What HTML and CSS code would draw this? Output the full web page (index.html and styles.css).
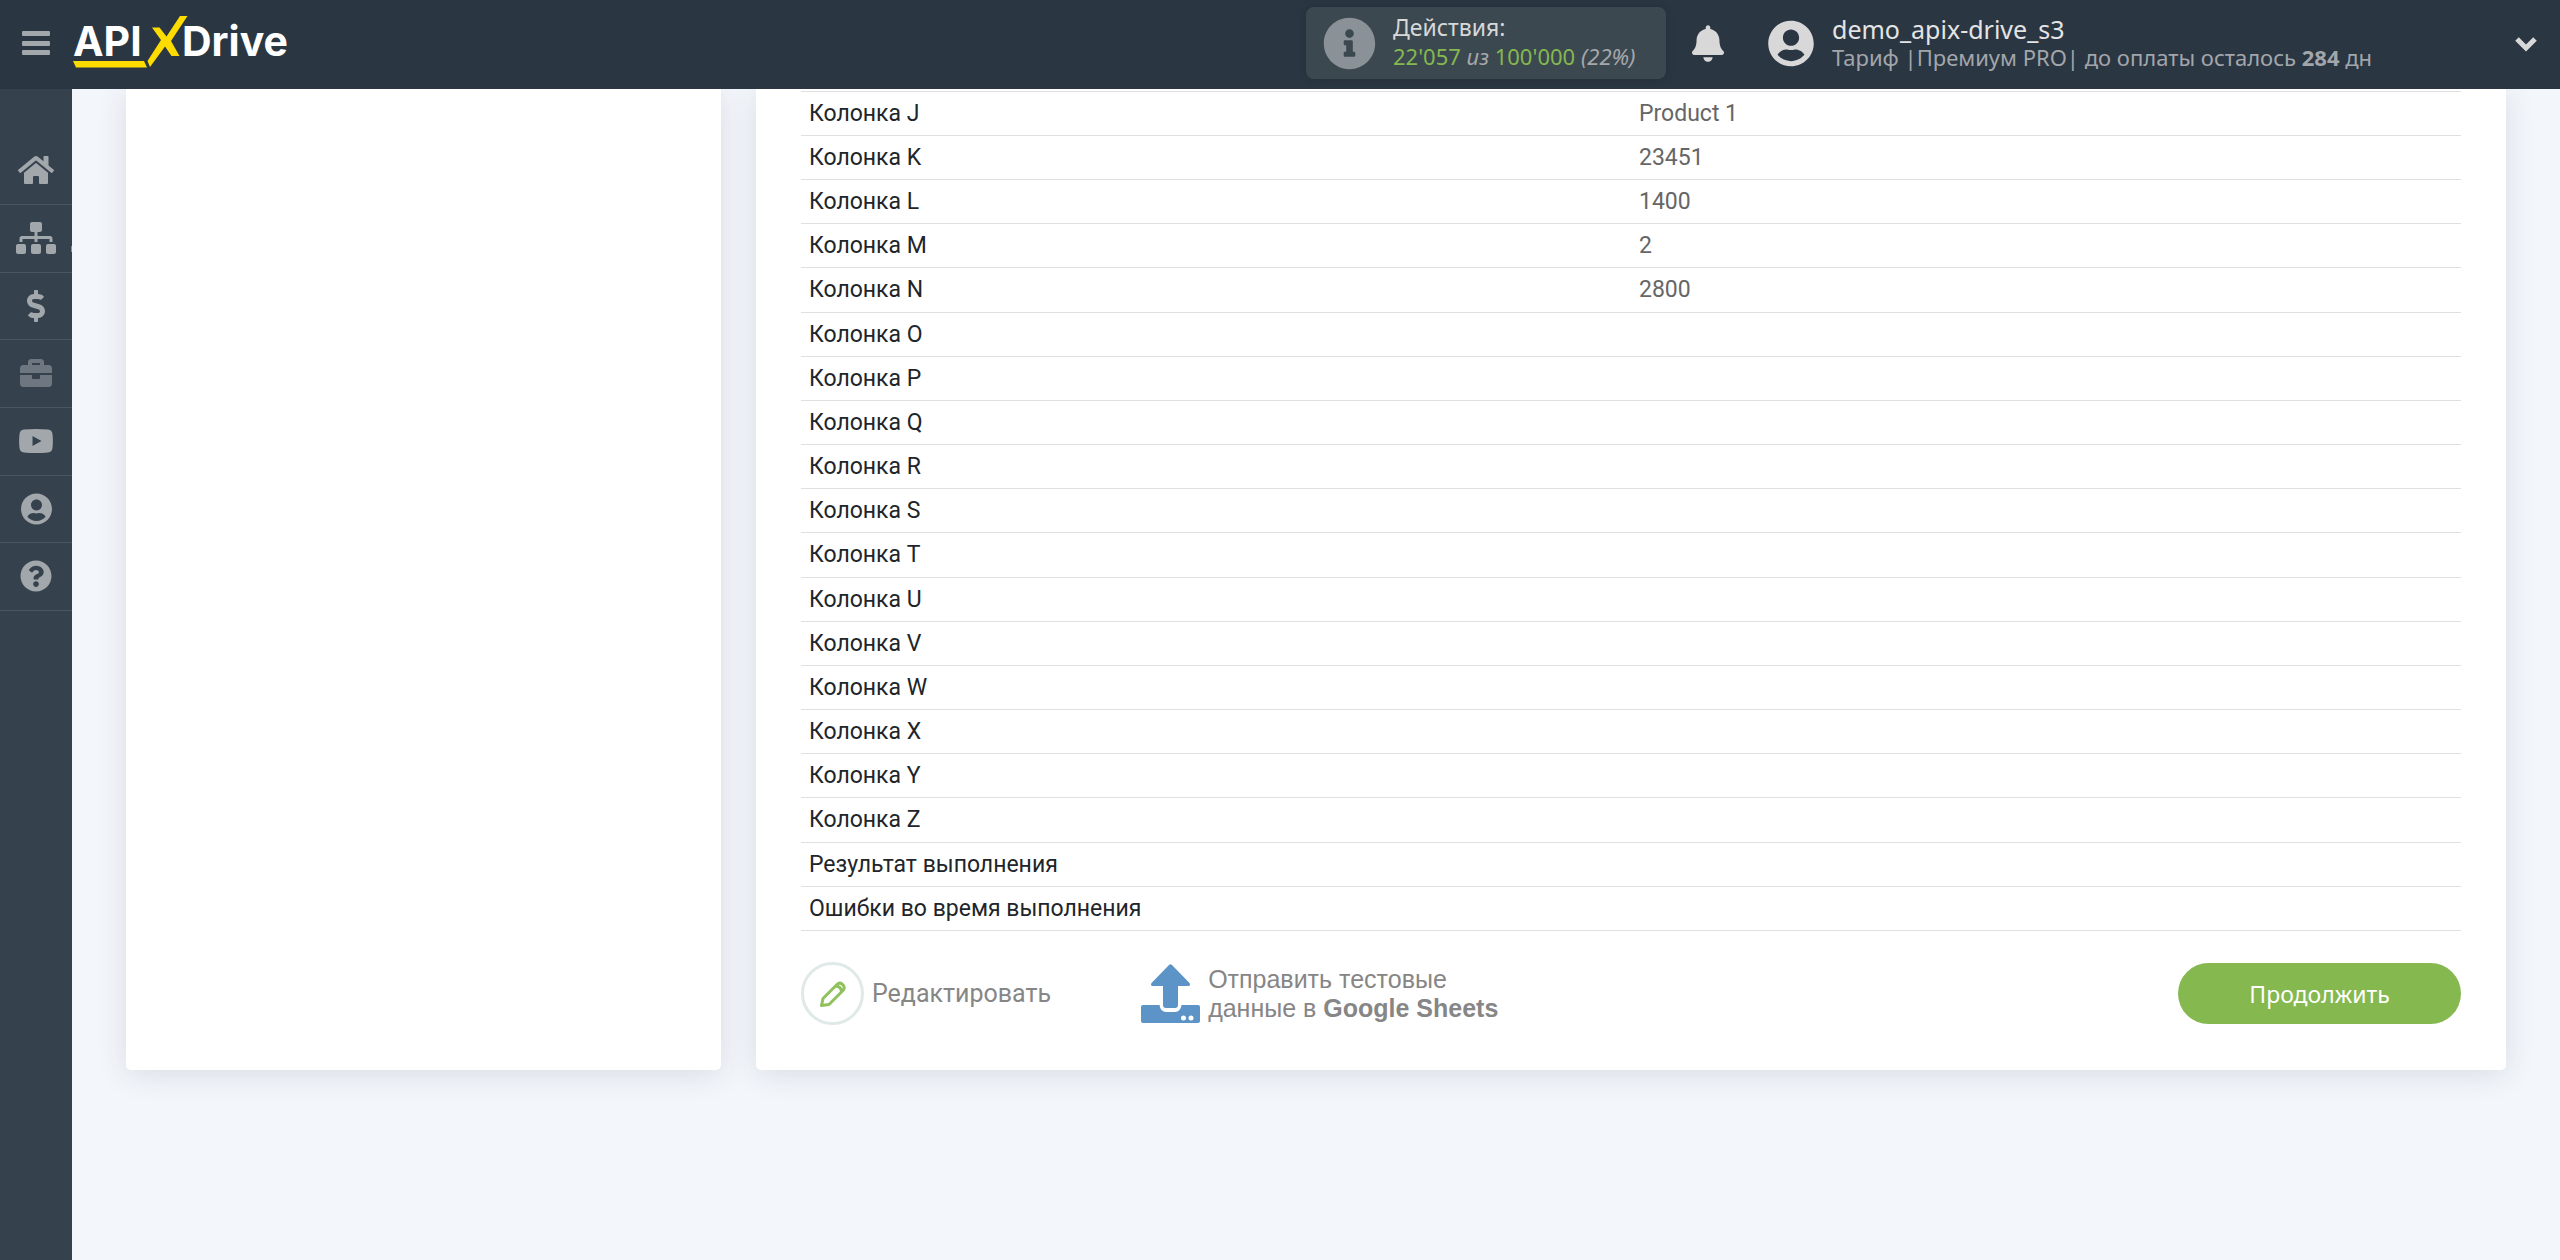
FILE: index.html
```html
<!DOCTYPE html>
<html lang="ru">
<head>
<meta charset="utf-8">
<title>ApiX-Drive</title>
<link rel="stylesheet" href="styles.css">
</head>
<body>
<header class="topbar">
  <button class="icon-btn menu-btn" type="button" aria-label="Меню">
    <svg width="28" height="24" viewBox="0 0 28 24"><rect width="28" height="5" rx="1"/><rect y="10" width="28" height="5" rx="1"/><rect y="19" width="28" height="5" rx="1"/></svg>
  </button>
  <a class="logo" href="#" aria-label="ApiX-Drive">
    <svg width="222" height="56" viewBox="0 1 222 56">
      <text class="logo-text" x="0" y="42">API</text>
      <text class="logo-text" x="109" y="42">Drive</text>
      <path class="logo-mark" d="M0 47H71L74 53.500H3z"/>
      <path class="logo-mark" d="M79 13.500H86.500L93.500 22.500L107 2H114.500L98 27L106.500 42H98.500L92 32.500L77 53L74.500 47L88 26z"/>
    </svg>
  </a>
  <div class="usage">
    <svg class="usage-icon" width="53" height="53" viewBox="0 0 512 512"><path d="M256 8C119.043 8 8 119.083 8 256c0 136.997 111.043 248 248 248s248-111.003 248-248C504 119.083 392.957 8 256 8zm0 110c23.196 0 42 18.804 42 42s-18.804 42-42 42-42-18.804-42-42 18.804-42 42-42zm56 254c0 6.627-5.373 12-12 12h-88c-6.627 0-12-5.373-12-12v-24c0-6.627 5.373-12 12-12h12v-64h-12c-6.627 0-12-5.373-12-12v-24c0-6.627 5.373-12 12-12h64c6.627 0 12 5.373 12 12v100h12c6.627 0 12 5.373 12 12v24z"/></svg>
    <div class="usage-text">
      <div class="usage-title">Действия:</div>
      <div class="usage-value"><span class="num">22'057</span> <i>из</i> <span class="num">100'000</span> <i>(22%)</i></div>
    </div>
  </div>
  <button class="icon-btn bell" type="button" aria-label="Уведомления">
    <svg width="32" height="37" viewBox="0 0 448 512"><path d="M224 512c35.320 0 63.970-28.650 63.970-64H160.030c0 35.350 28.650 64 63.970 64zm215.390-149.710c-19.320-20.760-55.470-51.990-55.470-154.290 0-77.700-54.480-139.900-127.940-155.160V32c0-17.670-14.320-32-31.980-32s-31.980 14.330-31.980 32v20.840C118.560 68.100 64.080 130.300 64.080 208c0 102.300-36.150 133.530-55.470 154.290-6 6.450-8.660 14.160-8.610 21.710.11 16.400 12.980 32 32.100 32h383.800c19.120 0 32-15.600 32.100-32 .05-7.550-2.610-15.270-8.610-21.710z"/></svg>
  </button>
  <div class="user">
    <svg class="user-icon" width="46" height="47" viewBox="0 0 496 512"><path d="M248 8C111 8 0 119 0 256s111 248 248 248 248-111 248-248S385 8 248 8zm0 96c48.600 0 88 39.400 88 88s-39.400 88-88 88-88-39.400-88-88 39.400-88 88-88zm0 344c-58.700 0-111.300-26.600-146.500-68.200 18.800-35.400 55.600-59.800 98.500-59.800 2.400 0 4.800.4 7.100 1.100 13 4.200 26.600 6.900 40.900 6.900 14.300 0 28-2.700 40.900-6.900 2.300-.7 4.700-1.100 7.100-1.100 42.900 0 79.700 24.400 98.500 59.800C359.300 421.400 306.700 448 248 448z"/></svg>
    <div class="user-text">
      <div class="user-name">demo_apix-drive_s3</div>
      <div class="user-plan">Тариф |Премиум PRO| до оплаты осталось <b>284</b> дн</div>
    </div>
    <button class="icon-btn more" type="button" aria-label="Развернуть">
      <svg width="24" height="17" viewBox="0 0 24 17"><path class="stroke" d="M3 4L12 13L21 4"/></svg>
    </button>
  </div>
</header>

<div class="layout">
  <nav class="sidebar">
    <a href="#" aria-label="Главная"><svg width="36" height="32" viewBox="0 0 576 512"><path d="M280.370 148.260L96 300.110V464a16 16 0 0 0 16 16l112.060-.29a16 16 0 0 0 15.920-16V368a16 16 0 0 1 16-16h64a16 16 0 0 1 16 16v95.640a16 16 0 0 0 16 16.050L464 480a16 16 0 0 0 16-16V300L295.670 148.260a12.190 12.190 0 0 0-15.300 0zM571.600 251.470L488 182.560V44.050a12 12 0 0 0-12-12h-56a12 12 0 0 0-12 12v72.610L318.470 43a48 48 0 0 0-61 0L4.340 251.470a12 12 0 0 0-1.600 16.900l25.500 31A12 12 0 0 0 45.150 301l235.220-193.740a12.190 12.190 0 0 1 15.300 0L530.900 301a12 12 0 0 0 16.900-1.600l25.500-31a12 12 0 0 0-1.700-16.930z"/></svg></a>
    <a class="has-sub" href="#" aria-label="Связи"><svg width="40" height="32" viewBox="0 0 640 512"><path d="M128 352H32c-17.670 0-32 14.330-32 32v96c0 17.670 14.330 32 32 32h96c17.670 0 32-14.330 32-32v-96c0-17.670-14.330-32-32-32zm-24-80h192v48h48v-48h192v48h48v-57.590c0-21.170-17.230-38.410-38.410-38.410H344v-64h40c17.670 0 32-14.330 32-32V32c0-17.670-14.330-32-32-32H256c-17.670 0-32 14.330-32 32v96c0 17.670 14.330 32 32 32h40v64H94.410C73.230 224 56 241.230 56 262.410V320h48v-48zm264 80h-96c-17.670 0-32 14.330-32 32v96c0 17.670 14.330 32 32 32h96c17.670 0 32-14.330 32-32v-96c0-17.670-14.330-32-32-32zm240 0h-96c-17.670 0-32 14.330-32 32v96c0 17.670 14.330 32 32 32h96c17.670 0 32-14.330 32-32v-96c0-17.670-14.330-32-32-32z"/></svg></a>
    <a href="#" aria-label="Оплата"><svg width="18" height="32" viewBox="0 0 288 512"><path d="M209.200 233.400l-108-31.600C88.700 198.200 80 186.500 80 173.500c0-16.300 13.200-29.500 29.500-29.500h66.300c12.200 0 24.200 3.700 34.200 10.500 6.100 4.100 14.300 3.100 19.500-2l34.800-34c7.100-6.900 6.100-18.400-1.800-24.500C238 74.800 207.400 64.100 176 64V16c0-8.800-7.200-16-16-16h-32c-8.800 0-16 7.200-16 16v48h-2.500C45.800 64-5.400 118.700.5 183.600c4.200 46.100 39.400 83.600 83.800 96.600l102.500 30c12.500 3.700 21.200 15.300 21.200 28.300 0 16.300-13.200 29.500-29.500 29.500h-66.300C100 368 88 364.300 78 357.500c-6.100-4.100-14.300-3.100-19.500 2l-34.800 34c-7.100 6.900-6.100 18.400 1.800 24.500 24.500 19.200 55.100 29.900 86.500 30v48c0 8.800 7.200 16 16 16h32c8.800 0 16-7.200 16-16v-48.200c46.600-.9 90.300-28.600 105.700-72.700 21.500-61.600-14.600-124.800-72.500-141.700z"/></svg></a>
    <a class="dim" href="#" aria-label="Партнёрам"><svg width="32" height="32" viewBox="0 0 512 512"><path d="M320 336c0 8.840-7.160 16-16 16h-96c-8.840 0-16-7.160-16-16v-48H0v144c0 25.600 22.400 48 48 48h416c25.600 0 48-22.400 48-48V288H320v48zm144-208h-80V80c0-25.600-22.400-48-48-48H176c-25.600 0-48 22.400-48 48v48H48c-25.600 0-48 22.400-48 48v80h512v-80c0-25.600-22.400-48-48-48zm-144 0H192V96h128v32z"/></svg></a>
    <a href="#" aria-label="Видео"><svg width="34" height="24" viewBox="0 0 34 24"><path fill-rule="evenodd" d="M5 .5Q17-.5 29 .5Q33 .8 33.500 5Q34.300 12 33.500 19Q33 23.200 29 23.500Q17 24.500 5 23.500Q1 23.200.5 19Q-.3 12 .5 5Q1 .8 5 .5zM13.500 7V17L22.500 12z"/></svg></a>
    <a href="#" aria-label="Профиль"><svg width="31" height="32" viewBox="0 0 496 512"><path d="M248 8C111 8 0 119 0 256s111 248 248 248 248-111 248-248S385 8 248 8zm0 96c48.600 0 88 39.400 88 88s-39.400 88-88 88-88-39.400-88-88 39.400-88 88-88zm0 344c-58.700 0-111.300-26.600-146.500-68.200 18.800-35.400 55.600-59.800 98.500-59.800 2.400 0 4.800.4 7.100 1.100 13 4.200 26.600 6.900 40.900 6.900 14.300 0 28-2.700 40.900-6.900 2.300-.7 4.700-1.100 7.100-1.100 42.900 0 79.700 24.400 98.500 59.800C359.300 421.400 306.700 448 248 448z"/></svg></a>
    <a href="#" aria-label="Помощь"><svg width="32" height="32" viewBox="0 0 512 512"><path d="M504 256c0 136.997-111.043 248-248 248S8 392.997 8 256C8 119.083 119.043 8 256 8s248 111.083 248 248zM262.655 90c-54.497 0-89.255 22.957-116.549 63.758-3.536 5.286-2.353 12.415 2.715 16.258l34.699 26.310c5.205 3.947 12.621 3.008 16.665-2.122 17.864-22.658 30.113-35.797 57.303-35.797 20.429 0 45.698 13.148 45.698 32.958 0 14.976-12.363 22.667-32.534 33.976C247.128 238.528 216 254.941 216 296v4c0 6.627 5.373 12 12 12h56c6.627 0 12-5.373 12-12v-1.333c0-28.462 83.186-29.647 83.186-106.667 0-58.002-60.165-102-116.531-102zM256 338c-25.365 0-46 20.635-46 46 0 25.364 20.635 46 46 46s46-20.636 46-46c0-25.365-20.635-46-46-46z"/></svg></a>
  </nav>

  <main class="content">
    <aside class="card"></aside>
    <section class="card main-card">
      <table class="fields">
        <tbody>
          <tr><th scope="row">Колонка J</th><td>Product 1</td></tr>
          <tr><th scope="row">Колонка K</th><td>23451</td></tr>
          <tr><th scope="row">Колонка L</th><td>1400</td></tr>
          <tr><th scope="row">Колонка M</th><td>2</td></tr>
          <tr><th scope="row">Колонка N</th><td>2800</td></tr>
          <tr><th scope="row">Колонка O</th><td></td></tr>
          <tr><th scope="row">Колонка P</th><td></td></tr>
          <tr><th scope="row">Колонка Q</th><td></td></tr>
          <tr><th scope="row">Колонка R</th><td></td></tr>
          <tr><th scope="row">Колонка S</th><td></td></tr>
          <tr><th scope="row">Колонка T</th><td></td></tr>
          <tr><th scope="row">Колонка U</th><td></td></tr>
          <tr><th scope="row">Колонка V</th><td></td></tr>
          <tr><th scope="row">Колонка W</th><td></td></tr>
          <tr><th scope="row">Колонка X</th><td></td></tr>
          <tr><th scope="row">Колонка Y</th><td></td></tr>
          <tr><th scope="row">Колонка Z</th><td></td></tr>
          <tr><th scope="row">Результат выполнения</th><td></td></tr>
          <tr><th scope="row">Ошибки во время выполнения</th><td></td></tr>
        </tbody>
      </table>
      <div class="actions">
        <button class="action" type="button">
          <span class="round">
            <svg width="28" height="28" viewBox="0 0 28 28"><path class="pencil" d="M2.500 25.500L4 18.500L18 4.500Q20.500 2 23 4L24.500 5.500Q26 8 24 10.500L10 24.500zM17 6Q22 6.500 22.500 11.500"/></svg>
          </span>
          <span>Редактировать</span>
        </button>
        <button class="action send" type="button">
          <svg width="59" height="59" viewBox="0 0 59 59"><path fill-rule="evenodd" d="M28 1Q29.500-.5 31 1L48.500 19Q50 22 47 22H37V41Q37 44 34 44H25Q22 44 22 41V22H12Q9 22 10.500 19zM2 41H18.500Q19.500 48 25 48H34Q39.500 48 40.500 41H57Q59 41 59 43V57Q59 59 57 59H2Q0 59 0 57V43Q0 41 2 41zM42.500 51.500a2.500 2.500 0 1 0 0 5a2.500 2.500 0 1 0 0-5zM50 51.500a2.500 2.500 0 1 0 0 5a2.500 2.500 0 1 0 0-5z"/></svg>
          <span>Отправить тестовые<br>данные в <b>Google Sheets</b></span>
        </button>
        <button class="primary" type="button">Продолжить</button>
      </div>
    </section>
  </main>
</div>
</body>
</html>
```
FILE: styles.css
```css
* { box-sizing: border-box; }

body {
  margin: 0;
  min-height: 100vh;
  display: flex;
  flex-direction: column;
  background: #f3f6fb;
  font-family: Roboto, "Noto Sans", sans-serif;
  font-size: 23px;
  color: #212529;
}

svg { display: block; flex: none; fill: currentColor; }
button { margin: 0; padding: 0; border: 0; background: none; font: inherit; cursor: pointer; }

/* Top bar */
.topbar {
  position: relative;
  z-index: 1;
  display: flex;
  align-items: center;
  height: 89px;
  padding: 0 22px 3px;
  background: #2b3643;
  color: #d8d8d8;
  font-family: "Noto Sans", "Open Sans", sans-serif;
}
.icon-btn { color: #d8d8d8; }
.menu-btn { color: #a1a7ab; }
.logo { margin-left: 23px; }
.logo-text { font: 700 41px Inter, sans-serif; fill: #fff; }
.logo-mark { fill: #ffdc00; }

.usage {
  display: flex;
  align-items: center;
  gap: 17px;
  width: 360px;
  height: 72px;
  margin-left: auto;
  padding: 0 17px;
  border-radius: 8px;
  background: #3c4850;
  box-shadow: 0 0 8px rgba(0, 0, 0, .15);
}
.usage-icon { color: #8a9197; }
.usage-text { padding-bottom: 2px; line-height: 29px; white-space: nowrap; }
.usage-title { font-size: 23px; }
.usage-value { font-size: 22px; color: #a5a7aa; }
.num { color: #85b84f; }

.bell { margin: 0 44px 0 26px; }

.user { display: flex; align-items: center; gap: 18px; width: 770px; }
.user-text { line-height: 28px; white-space: nowrap; }
.user-name { font-size: 25px; color: #e4e4e4; }
.user-plan { font-size: 22px; color: #a2a6ab; }
.more { margin-left: auto; }
.stroke { fill: none; stroke: currentColor; stroke-width: 5; }

/* Page */
.layout { display: flex; flex: 1; }

.sidebar { width: 72px; padding-top: 48px; background: #36414e; }
.sidebar a {
  display: flex;
  align-items: center;
  justify-content: center;
  height: 68px;
  padding-bottom: 1px;
  border-bottom: 1px solid #4a5561;
  color: #a1a7ab;
}
.sidebar a:nth-child(3n) { height: 67px; }
.sidebar .dim { color: #6e7780; }
.sidebar .has-sub { position: relative; }
.sidebar .has-sub::after {
  content: "";
  position: absolute;
  right: 0;
  top: 41px;
  width: 1px;
  height: 6px;
  background: #8a9197;
}

.content {
  flex: 1;
  min-width: 0;
  display: grid;
  grid-template-columns: 25% 1fr;
  gap: 35px;
  align-items: stretch;
  align-content: start;
  padding: 0 54px;
}
.card {
  border-radius: 0 0 5px 5px;
  background: #fff;
  box-shadow: 0 4px 30px rgba(43, 54, 67, .13);
}
.main-card { padding: 2px 45px 45px; }

.fields {
  width: 100%;
  table-layout: fixed;
  border-collapse: collapse;
  border-top: 1px solid #dee0e2;
}
.fields tr { height: 44px; border-bottom: 1px solid #dee0e2; }
.fields tr:nth-child(6n + 5) { height: 45px; }
.fields th,
.fields td {
  padding: 0 8px;
  font-weight: 400;
  line-height: 28px;
  text-align: left;
}
.fields td { color: #666; }

.actions { display: flex; align-items: center; padding-top: 31px; }
.action {
  display: flex;
  align-items: center;
  gap: 8px;
  color: #868686;
  font-size: 25px;
  line-height: 29px;
  text-align: left;
  white-space: nowrap;
}
.round {
  display: grid;
  place-items: center;
  width: 63px;
  height: 63px;
  border: 3px solid #dfe9e8;
  border-radius: 50%;
}
.pencil { fill: none; stroke: #8fc15c; stroke-width: 3; stroke-linejoin: round; }
.send { margin-left: 90px; font-family: "Liberation Sans", Arial, sans-serif; }
.send svg { color: #5c94c8; }
.primary {
  width: 283px;
  height: 61px;
  margin-left: auto;
  border-radius: 31px;
  background: #85b84f;
  color: #fff;
  font-family: "Noto Sans", "Open Sans", sans-serif;
}
```
